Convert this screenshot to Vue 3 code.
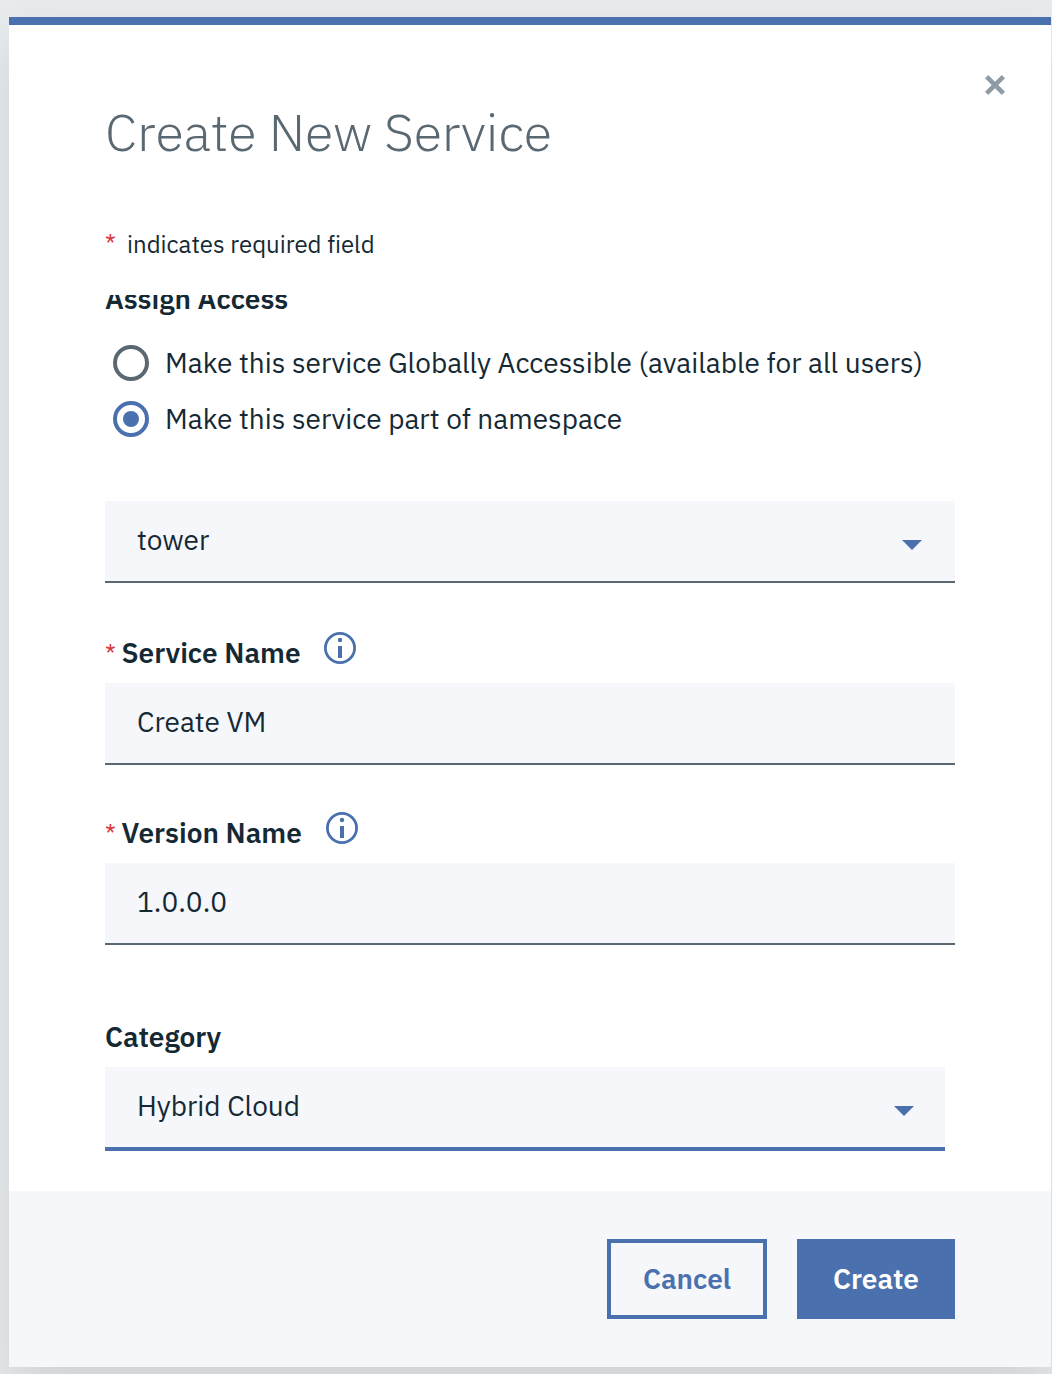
<script setup>
import { ref } from 'vue'

const options = [
  { id: 'global', label: 'Make this service Globally Accessible (available for all users)' },
  { id: 'namespace', label: 'Make this service part of namespace' },
]
const access = ref('namespace')
</script>

<template>
  <div class="backdrop">
    <section class="modal" role="dialog">
      <header class="head">
        <h1 class="title">Create New Service</h1>
        <button class="close" aria-label="Close">
          <svg width="20" height="20" viewBox="0 0 10 10">
            <path d="M9.8 1.6 8.4.2 5 3.6 1.6.2.2 1.6 3.6 5 .2 8.4l1.4 1.4L5 6.4l3.4 3.4 1.4-1.4L6.4 5z" />
          </svg>
        </button>
        <p class="hint"><span class="star">*</span><span>indicates required field</span></p>
      </header>

      <div class="content">
        <div class="label access">Assign Access</div>
        <div class="radios">
          <div v-for="o in options" :key="o.id" class="radio" :class="{ on: access === o.id }" @click="access = o.id">
            <i class="dot"></i><span>{{ o.label }}</span>
          </div>
        </div>

        <div class="field namespace">
          <span>tower</span>
          <svg class="caret" width="20" height="10" viewBox="0 0 20 10"><path d="M0 0h20L10 10z" /></svg>
        </div>

        <div class="label service">
          <span class="star">*</span><span>Service Name</span>
          <svg class="info" width="32" height="32" viewBox="0 0 32 32">
            <circle class="ring" cx="16" cy="16" r="14.6" />
            <circle cx="16" cy="8" r="2.2" />
            <path d="M14 14h4v12h-4z" />
          </svg>
        </div>
        <div class="field"><span>Create VM</span></div>

        <div class="label version">
          <span class="star">*</span><span>Version Name</span>
          <svg class="info" width="32" height="32" viewBox="0 0 32 32">
            <circle class="ring" cx="16" cy="16" r="14.6" />
            <circle cx="16" cy="8" r="2.2" />
            <path d="M14 14h4v12h-4z" />
          </svg>
        </div>
        <div class="field"><span>1.0.0.0</span></div>

        <div class="label category">Category</div>
        <div class="field focused">
          <span>Hybrid Cloud</span>
          <svg class="caret" width="20" height="10" viewBox="0 0 20 10"><path d="M0 0h20L10 10z" /></svg>
        </div>
      </div>

      <footer class="foot">
        <button class="btn cancel">Cancel</button>
        <button class="btn create">Create</button>
      </footer>
    </section>
  </div>
</template>

<style>
body { margin: 0; background: #e6eaed; }
</style>

<style scoped>
* { box-sizing: border-box; }
.backdrop {
  height: 1374px;
  padding: 17px 1px 0 9px;
  overflow: hidden;
  background: #e7ebee;
  font-family: "IBM Plex Sans", Roboto, sans-serif;
  font-size: 28px;
  font-variant-ligatures: none;
  color: #152935;
  white-space: nowrap;
}
.modal {
  height: 1350px;
  display: flex;
  flex-direction: column;
  background: #fff;
  border-top: 8px solid #4a70ad;
  box-shadow: 0 24px 48px rgba(0, 0, 0, 0.1);
}
.head { position: relative; height: 270px; padding: 75px 96px 0; flex: none; }
.title {
  margin: 0;
  font-size: 52px;
  line-height: 64px;
  font-weight: 300;
  letter-spacing: -0.05px;
  color: #5a6872;
}
.close {
  position: absolute;
  top: 50px;
  right: 46px;
  width: 20px;
  height: 20px;
  padding: 0;
  border: 0;
  background: none;
}
.close svg { display: block; overflow: visible; }
.close path { fill: #8c9ba5; stroke: #8c9ba5; stroke-width: 0.4; stroke-linejoin: round; }
.hint { margin: 64px 0 0; display: flex; font-size: 24px; line-height: 32px; }
.star { width: 16.5px; flex: none; color: #d8393c; font-size: 24px; font-weight: 400; }
.label .star { line-height: 37px; }
.hint .star { width: 22px; line-height: 30px; }
.content { height: 896px; padding: 0 96px; overflow: hidden; flex: none; }
.label { display: flex; height: 36px; line-height: 36px; font-weight: 600; margin: 52px 0 12px; }
.access { margin: -14px 0 0; }
.radios { display: flex; flex-direction: column; gap: 16px; margin-top: 26px; }
.radio { display: flex; align-items: center; height: 40px; padding-left: 8px; gap: 16px; line-height: 40px; }
.dot { width: 36px; height: 36px; border: 4px solid #5a6872; border-radius: 50%; display: grid; place-items: center; }
.on .dot { border-color: #4a70ad; }
.on .dot::after { content: ""; width: 16px; height: 16px; border-radius: 50%; background: #4a70ad; }
.field {
  display: flex;
  justify-content: space-between;
  width: 850px;
  height: 82px;
  padding: 0 33px 0 32px;
  line-height: 77px;
  background: #f5f7fb;
  border-bottom: 2px solid #5a6872;
}
.namespace { margin-top: 62px; }
.focused { width: 840px; height: 84px; padding-right: 31px; border-bottom: 4px solid #4a70ad; }
.caret { margin-top: 39px; fill: #4a70ad; }
.info { margin: -3px 0 0 23.6px; fill: #4a70ad; }
.version .info { margin-left: 24.4px; }
.ring { fill: none; stroke: #4a70ad; stroke-width: 2.8; }
.version { margin-top: 50px; }
.category { margin-top: 74px; }
.foot {
  flex: 1;
  display: flex;
  justify-content: flex-end;
  gap: 30px;
  padding: 48px 96px 0;
  background: #f5f7fb;
}
.btn {
  height: 80px;
  padding: 0;
  border: 4px solid #4a70ad;
  background: none;
  color: #4a70ad;
  font: 600 28px/72px "IBM Plex Sans", Roboto, sans-serif;
}
.cancel { width: 160px; }
.create { width: 158px; background: #4a70ad; color: #fff; }
</style>
